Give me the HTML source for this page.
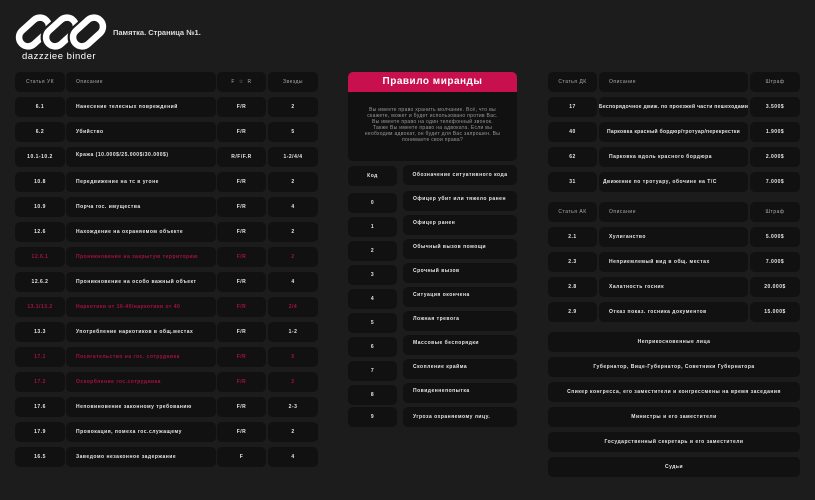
<!DOCTYPE html>
<html><head><meta charset="utf-8"><style>
body{margin:0;width:815px;height:500px;background:#1c1c1c;overflow:hidden;position:relative;font-family:"Liberation Sans","DejaVu Sans",sans-serif;}
.c{position:absolute;background:#111;border-radius:5px;height:20px;line-height:20px;color:#e6e6e6;font-size:5px;font-weight:bold;letter-spacing:.5px;text-align:center;white-space:nowrap;overflow:hidden}
.l{text-align:left;padding-left:10px;box-sizing:border-box}
.h{color:#aaa;font-weight:normal}
.r{color:#a8123f}
</style></head><body>
<svg style="position:absolute;left:0;top:0" width="120" height="60" viewBox="0 0 120 60">
<g fill="none" stroke="#fff" stroke-width="6.5">
<rect x="17" y="23" width="34" height="18" rx="9" transform="rotate(-42 34 32)"/>
<rect x="44" y="23" width="34" height="18" rx="9" transform="rotate(-42 61 32)" stroke="#1c1c1c" stroke-width="11"/>
<rect x="44" y="23" width="34" height="18" rx="9" transform="rotate(-42 61 32)"/>
<rect x="71" y="23" width="34" height="18" rx="9" transform="rotate(-42 88 32)" stroke="#1c1c1c" stroke-width="11"/>
<rect x="71" y="23" width="34" height="18" rx="9" transform="rotate(-42 88 32)"/>
</g></svg>
<div style="position:absolute;left:22px;top:51px;color:#fff;font-size:9.5px;letter-spacing:.5px">dazzziee binder</div>
<div style="position:absolute;left:113px;top:28px;color:#ddd;font-size:7.5px;font-weight:bold">Памятка. Страница №1.</div>

<!-- Left table -->
<div class="c h" style="left:15px;top:72px;width:50px">Статья УК</div>
<div class="c l h" style="left:66px;top:72px;width:150px">Описание</div>
<div class="c h" style="left:217px;top:72px;width:49px">F &nbsp;☆&nbsp; R</div>
<div class="c h" style="left:268px;top:72px;width:50px">Звезды</div>

<div class="c" style="left:15px;top:97px;width:50px">6.1</div><div class="c l" style="left:66px;top:97px;width:150px">Нанесение телесных повреждений</div><div class="c" style="left:217px;top:97px;width:49px">F/R</div><div class="c" style="left:268px;top:97px;width:50px">2</div>
<div class="c" style="left:15px;top:122px;width:50px">6.2</div><div class="c l" style="left:66px;top:122px;width:150px">Убийство</div><div class="c" style="left:217px;top:122px;width:49px">F/R</div><div class="c" style="left:268px;top:122px;width:50px">5</div>
<div class="c" style="left:15px;top:147px;width:50px">10.1-10.2</div><div class="c l" style="left:66px;top:147px;width:150px;line-height:16px">Кража (10.000$/25.000$/30.000$)</div><div class="c" style="left:217px;top:147px;width:49px">R/F/F.R</div><div class="c" style="left:268px;top:147px;width:50px">1-2/4/4</div>
<div class="c" style="left:15px;top:172px;width:50px">10.8</div><div class="c l" style="left:66px;top:172px;width:150px">Передвижение на тс в угоне</div><div class="c" style="left:217px;top:172px;width:49px">F/R</div><div class="c" style="left:268px;top:172px;width:50px">2</div>
<div class="c" style="left:15px;top:197px;width:50px">10.9</div><div class="c l" style="left:66px;top:197px;width:150px">Порча гос. имущества</div><div class="c" style="left:217px;top:197px;width:49px">F/R</div><div class="c" style="left:268px;top:197px;width:50px">4</div>
<div class="c" style="left:15px;top:222px;width:50px">12.6</div><div class="c l" style="left:66px;top:222px;width:150px">Нахождение на охраняемом объекте</div><div class="c" style="left:217px;top:222px;width:49px">F/R</div><div class="c" style="left:268px;top:222px;width:50px">2</div>
<div class="c r" style="left:15px;top:247px;width:50px">12.6.1</div><div class="c l r" style="left:66px;top:247px;width:150px">Проникновение на закрытую территорию</div><div class="c r" style="left:217px;top:247px;width:49px">F/R</div><div class="c r" style="left:268px;top:247px;width:50px">2</div>
<div class="c" style="left:15px;top:272px;width:50px">12.6.2</div><div class="c l" style="left:66px;top:272px;width:150px">Проникновение на особо важный объект</div><div class="c" style="left:217px;top:272px;width:49px">F/R</div><div class="c" style="left:268px;top:272px;width:50px">4</div>
<div class="c r" style="left:15px;top:297px;width:50px">13.1/13.2</div><div class="c l r" style="left:66px;top:297px;width:150px">Наркотики от 10-40/наркотики от 40</div><div class="c r" style="left:217px;top:297px;width:49px">F/R</div><div class="c r" style="left:268px;top:297px;width:50px">2/4</div>
<div class="c" style="left:15px;top:322px;width:50px">13.3</div><div class="c l" style="left:66px;top:322px;width:150px">Употребление наркотиков в общ.местах</div><div class="c" style="left:217px;top:322px;width:49px">F/R</div><div class="c" style="left:268px;top:322px;width:50px">1-2</div>
<div class="c r" style="left:15px;top:347px;width:50px">17.1</div><div class="c l r" style="left:66px;top:347px;width:150px">Посягательство на гос. сотрудника</div><div class="c r" style="left:217px;top:347px;width:49px">F/R</div><div class="c r" style="left:268px;top:347px;width:50px">5</div>
<div class="c r" style="left:15px;top:372px;width:50px">17.2</div><div class="c l r" style="left:66px;top:372px;width:150px">Оскорбление гос.сотрудника</div><div class="c r" style="left:217px;top:372px;width:49px">F/R</div><div class="c r" style="left:268px;top:372px;width:50px">2</div>
<div class="c" style="left:15px;top:397px;width:50px">17.6</div><div class="c l" style="left:66px;top:397px;width:150px">Неповиновение законному требованию</div><div class="c" style="left:217px;top:397px;width:49px">F/R</div><div class="c" style="left:268px;top:397px;width:50px">2-3</div>
<div class="c" style="left:15px;top:422px;width:50px">17.9</div><div class="c l" style="left:66px;top:422px;width:150px">Провокация, помеха гос.служащему</div><div class="c" style="left:217px;top:422px;width:49px">F/R</div><div class="c" style="left:268px;top:422px;width:50px">2</div>
<div class="c" style="left:15px;top:447px;width:50px">16.5</div><div class="c l" style="left:66px;top:447px;width:150px">Заведомо незаконное задержание</div><div class="c" style="left:217px;top:447px;width:49px">F</div><div class="c" style="left:268px;top:447px;width:50px">4</div>

<!-- Miranda -->
<div style="position:absolute;left:348px;top:72px;width:169px;height:89px;background:#111;border-radius:5px;overflow:hidden">
<div style="height:20px;background:#c8104f;color:#fff;font-size:10px;font-weight:bold;line-height:20px;text-align:center;letter-spacing:.5px">Правило миранды</div>
<div style="padding:15px 16px 0;color:#999;font-size:5px;line-height:6px;text-align:center;letter-spacing:.3px">Вы имеете право хранить молчание. Всё, что вы скажете, может и будет использовано против Вас. Вы имеете право на один телефонный звонок. Также Вы имеете право на адвоката. Если вы необходим адвокат, он будет для Вас запрошен. Вы понимаете свои права?</div>
</div>
<div class="c" style="left:348px;top:166px;width:49px">Код</div>
<div class="c" style="left:403px;top:165px;width:114px">Обозначение ситуативного кода</div>
<div class="c" style="left:348px;top:193px;width:49px">0</div><div class="c l" style="left:403px;top:191px;width:114px;line-height:16px">Офицер убит или тяжело ранен</div>
<div class="c" style="left:348px;top:217px;width:49px">1</div><div class="c l" style="left:403px;top:215px;width:114px;line-height:16px">Офицер ранен</div>
<div class="c" style="left:348px;top:241px;width:49px">2</div><div class="c l" style="left:403px;top:239px;width:114px;line-height:16px">Обычный вызов помощи</div>
<div class="c" style="left:348px;top:265px;width:49px">3</div><div class="c l" style="left:403px;top:263px;width:114px;line-height:16px">Срочный вызов</div>
<div class="c" style="left:348px;top:289px;width:49px">4</div><div class="c l" style="left:403px;top:287px;width:114px;line-height:16px">Ситуация окончена</div>
<div class="c" style="left:348px;top:313px;width:49px">5</div><div class="c l" style="left:403px;top:311px;width:114px;line-height:16px">Ложная тревога</div>
<div class="c" style="left:348px;top:337px;width:49px">6</div><div class="c l" style="left:403px;top:335px;width:114px;line-height:16px">Массовые беспорядки</div>
<div class="c" style="left:348px;top:361px;width:49px">7</div><div class="c l" style="left:403px;top:359px;width:114px;line-height:16px">Скопление крайма</div>
<div class="c" style="left:348px;top:385px;width:49px">8</div><div class="c l" style="left:403px;top:383px;width:114px;line-height:16px">Повиденнепопытка</div>
<div class="c" style="left:348px;top:407px;width:49px">9</div><div class="c l" style="left:403px;top:407px;width:114px">Угроза охраняемому лицу.</div>

<!-- Right -->
<div class="c h" style="left:548px;top:72px;width:49px">Статья ДК</div><div class="c l h" style="left:599px;top:72px;width:149px">Описание</div><div class="c h" style="left:750px;top:72px;width:50px">Штраф</div>
<div class="c" style="left:548px;top:97px;width:49px">17</div><div class="c" style="left:599px;top:97px;width:149px;letter-spacing:.3px">Беспорядочное движ. по проезжей части пешеходами</div><div class="c" style="left:750px;top:97px;width:50px">3.500$</div>
<div class="c" style="left:548px;top:122px;width:49px">40</div><div class="c" style="left:599px;top:122px;width:149px;letter-spacing:.3px">Парковка красный бордюр/тротуар/перекрестки</div><div class="c" style="left:750px;top:122px;width:50px">1.900$</div>
<div class="c" style="left:548px;top:147px;width:49px">62</div><div class="c l" style="left:599px;top:147px;width:149px">Парковка вдоль красного бордюра</div><div class="c" style="left:750px;top:147px;width:50px">2.000$</div>
<div class="c" style="left:548px;top:172px;width:49px">31</div><div class="c l" style="left:599px;top:172px;width:149px;padding-left:4px">Движение по тротуару, обочине на Т/С</div><div class="c" style="left:750px;top:172px;width:50px">7.000$</div>

<div class="c h" style="left:548px;top:202px;width:49px">Статья АК</div><div class="c l h" style="left:599px;top:202px;width:149px">Описание</div><div class="c h" style="left:750px;top:202px;width:50px">Штраф</div>
<div class="c" style="left:548px;top:227px;width:49px">2.1</div><div class="c l" style="left:599px;top:227px;width:149px">Хулиганство</div><div class="c" style="left:750px;top:227px;width:50px">5.000$</div>
<div class="c" style="left:548px;top:252px;width:49px">2.3</div><div class="c l" style="left:599px;top:252px;width:149px">Неприемлемый вид в общ. местах</div><div class="c" style="left:750px;top:252px;width:50px">7.000$</div>
<div class="c" style="left:548px;top:277px;width:49px">2.8</div><div class="c l" style="left:599px;top:277px;width:149px">Халатность госник</div><div class="c" style="left:750px;top:277px;width:50px">20.000$</div>
<div class="c" style="left:548px;top:302px;width:49px">2.9</div><div class="c l" style="left:599px;top:302px;width:149px">Отказ показ. госника документов</div><div class="c" style="left:750px;top:302px;width:50px">15.000$</div>

<div class="c" style="left:548px;top:332px;width:252px">Неприкосновенные лица</div>
<div class="c" style="left:548px;top:357px;width:252px">Губернатор, Вице-Губернатор, Советники Губернатора</div>
<div class="c" style="left:548px;top:382px;width:252px">Спикер конгресса, его заместители и конгрессмены на время заседания</div>
<div class="c" style="left:548px;top:407px;width:252px">Министры и его заместители</div>
<div class="c" style="left:548px;top:432px;width:252px">Государственный секретарь и его заместители</div>
<div class="c" style="left:548px;top:457px;width:252px">Судьи</div>
</body></html>
